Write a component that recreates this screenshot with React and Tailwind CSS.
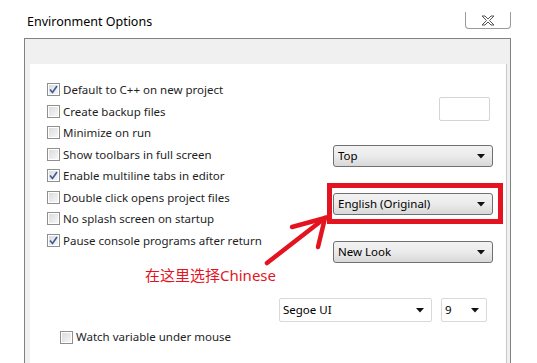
import React from 'react';

const OPTIONS = [
  { label: 'Default to C++ on new project', checked: true },
  { label: 'Create backup files', checked: false },
  { label: 'Minimize on run', checked: false },
  { label: 'Show toolbars in full screen', checked: false },
  { label: 'Enable multiline tabs in editor', checked: true },
  { label: 'Double click opens project files', checked: false },
  { label: 'No splash screen on startup', checked: false },
  { label: 'Pause console programs after return', checked: true },
];

const Check = ({ checked }) => (
  <div className="w-[13px] h-[13px] border border-[#8e8f8f] bg-white p-[1px] shrink-0">
    <div className="w-full h-full bg-gradient-to-br from-[#dcdcdc] to-[#f6f6f6] flex items-center justify-center">
      {checked && (
        <svg width="9" height="9" viewBox="0 0 9 9">
          <path d="M1 4.5 L3.5 7.5 L8 1" fill="none" stroke="#3c5a9a" strokeWidth="1.6" />
        </svg>
      )}
    </div>
  </div>
);

const Caret = () => (
  <svg width="8" height="5" viewBox="0 0 8 5" className="shrink-0">
    <path d="M0 0 L8 0 L4 4.5 Z" fill="#111" />
  </svg>
);

const Dropdown = ({ value }) => (
  <div className="h-[22px] w-[160px] flex items-center justify-between pl-[4px] pr-[7px] border border-[#707070] rounded-[3px] bg-gradient-to-b from-[#f3f3f3] via-[#ebebeb] to-[#d8d8d8] text-[11.5px] text-black">
    <span>{value}</span>
    <Caret />
  </div>
);

export default function App() {
  return (
    <div className="relative w-[537px] h-[363px] overflow-hidden bg-white text-[#1e1e1e]" style={{ fontFamily: '"Noto Sans", "Open Sans", sans-serif' }}>
      <div className="h-[38px] flex items-start justify-between pl-[27px] pr-[26px]">
        <div className="mt-[13px] text-[12.5px] leading-[18px] text-black">Environment Options</div>
        <div className="mt-[12px] w-[46px] h-[17px] border border-t-0 border-[#9a9a9a] rounded-b-[4px] flex items-center justify-center">
          <svg width="14" height="11" viewBox="0 0 14 11">
            <path d="M1 1 L4 1 L7 4 L10 1 L13 1 L8.5 5.5 L13 10 L10 10 L7 7 L4 10 L1 10 L5.5 5.5 Z" fill="#fff" stroke="#555" strokeWidth="1" strokeLinejoin="round" />
          </svg>
        </div>
      </div>

      <div className="ml-[24px] w-[487px] h-[325px] border-l border-t border-r border-[#828282] bg-[#f0f0f0] pt-[25px] pl-[5px] pr-[3px]">
        <div className="h-full bg-white border-r border-[#c8c8c8]">
          <div className="flex pt-[15px]">
            <div className="w-[303px] pl-[17px]">
              {OPTIONS.map((o) => (
                <div key={o.label} className="h-[21.5px] flex items-center gap-[3px] text-[11.5px]">
                  <Check checked={o.checked} />
                  <span>{o.label}</span>
                </div>
              ))}
            </div>
            <div className="w-[160px] flex flex-col">
              <div className="mt-[18px] ml-auto mr-[3px] w-[51px] h-[24px] border border-[#d4d4d4] rounded-[2px]" />
              <div className="mt-[24px]"><Dropdown value="Top" /></div>
              <div className="mt-[26px]"><Dropdown value="English (Original)" /></div>
              <div className="mt-[26px]"><Dropdown value="New Look" /></div>
            </div>
          </div>

          <div className="flex mt-[35px] pl-[249px] gap-[9px]">
            <div className="w-[153px] h-[24px] border border-[#d9d9d9] rounded-[2px] flex items-center justify-between pl-[3px] pr-[7px] text-[11.5px] text-black">
              <span>Segoe UI</span>
              <Caret />
            </div>
            <div className="w-[46px] h-[24px] border border-[#d9d9d9] rounded-[2px] flex items-center justify-between pl-[3px] pr-[7px] text-[11.5px] text-black">
              <span>9</span>
              <Caret />
            </div>
          </div>

          <div className="flex items-center gap-[3px] mt-[5px] pl-[30px] h-[20px] text-[11.5px]">
            <Check checked={false} />
            <span>Watch variable under mouse</span>
          </div>
        </div>
      </div>

      {/* red annotation */}
      <div className="absolute left-[327px] top-[183px] w-[176px] h-[41px] border-[5px] border-[#e3141f]" />
      <svg className="absolute left-0 top-0" width="537" height="363" viewBox="0 0 537 363">
        <g stroke="#e3141f" strokeWidth="4.5" strokeLinecap="round" fill="none">
          <path d="M267 263 L325 218" />
          <path d="M292 227 L325 218 L318 247" />
        </g>
      </svg>
      <div className="absolute left-[145px] top-[264px] text-[15px] leading-[22px] text-[#e3141f]" style={{ fontFamily: '"Noto Sans", "Noto Sans CJK SC", sans-serif' }}>
        在这里选择Chinese
      </div>
    </div>
  );
}
